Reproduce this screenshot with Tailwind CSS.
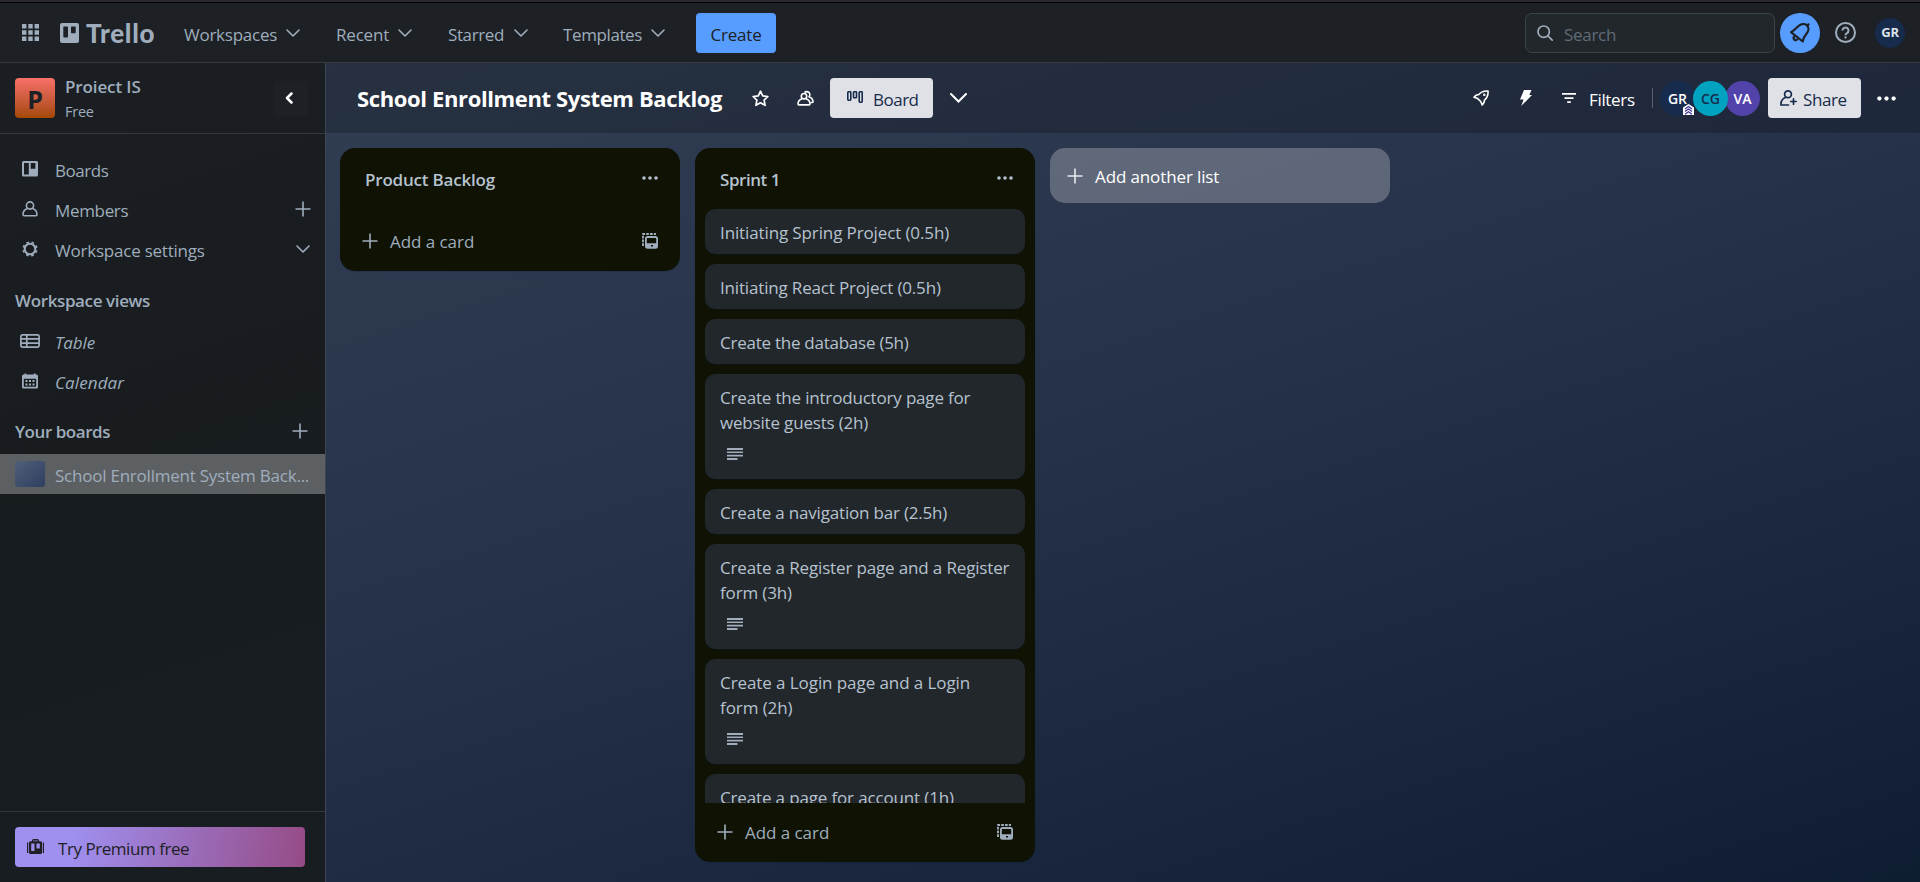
<!DOCTYPE html>
<html lang="en">
<head>
<meta charset="utf-8">
<title>School Enrollment System Backlog | Trello</title>
<script src="https://cdn.jsdelivr.net/npm/@tailwindcss/browser@4"></script>
</head>
<body class="h-[882px] w-[1920px] overflow-hidden bg-[linear-gradient(162deg,#344154_0%,#26324a_50%,#0f1d33_100%)] font-['Open_Sans','Noto_Sans',sans-serif] text-[17px] leading-[25px] text-[#9fadbc]">
<svg class="hidden">
  <symbol id="chev" viewBox="0 0 14 8"><path d="M1 1l6 6 6-6" fill="none" stroke="currentColor" stroke-width="1.6" stroke-linecap="round" stroke-linejoin="round"/></symbol>
  <symbol id="plus" viewBox="0 0 16 16"><path d="M8 .5v15M.5 8h15" fill="none" stroke="currentColor" stroke-width="1.6"/></symbol>
  <symbol id="dots" viewBox="0 0 16 4"><circle cx="2" cy="2" r="1.8"/><circle cx="8" cy="2" r="1.8"/><circle cx="14" cy="2" r="1.8"/></symbol>
  <symbol id="desc" viewBox="0 0 16 12"><path d="M0 0h16v2H0zM0 3.4h16v1.7H0zM0 6.8h16v1.7H0zM0 10h10.5v2H0z"/></symbol>
  <symbol id="template" viewBox="0 0 16 16"><path d="M1 13V1h13" fill="none" stroke="currentColor" stroke-width="1.9" stroke-dasharray="2.700 1.100"/><rect x="3.900" y="4" width="11.200" height="10.800" rx="1.600" fill="none" stroke="currentColor" stroke-width="1.800"/><path d="M4 10.300h11.200v1.700H4zM4 12h5v3H4zM11 12h4v3h-4zM9 13.500h2V15H9z"/></symbol>
</svg>
<div class="flex h-full flex-col">
  <!-- Top navigation -->
  <div class="h-[3px] shrink-0 border-b border-black bg-[#2b2a33]"></div>
  <nav class="flex h-[60px] shrink-0 items-center border-b border-[#37393d] bg-[#1d2125] pr-[15px] pl-[22px]">
    <svg class="h-[17px] w-[17px]" viewBox="0 0 17 17" fill="currentColor"><path d="M0 0h4.400v4.400H0zM6.300 0h4.400v4.400H6.300zM12.600 0H17v4.400h-4.400zM0 6.300h4.400v4.400H0zM6.300 6.300h4.400v4.400H6.300zM12.600 6.300H17v4.400h-4.400zM0 12.600h4.400V17H0zM6.300 12.600h4.400V17H6.300zM12.600 12.600H17V17h-4.400z"/></svg>
    <svg class="ml-[21px] h-5 w-[19px]" viewBox="0 0 19 20" fill="currentColor"><path fill-rule="evenodd" d="M2 0h15a2 2 0 0 1 2 2v16a2 2 0 0 1-2 2H2a2 2 0 0 1-2-2V2a2 2 0 0 1 2-2zM3.900 3.600a.6.6 0 0 0-.6.6v9.600c0 .3.300.6.600.6h3.500c.3 0 .6-.3.600-.6V4.200a.6.6 0 0 0-.6-.6zM11.600 3.600a.6.6 0 0 0-.6.6v5.400c0 .3.300.6.600.6h3.500c.3 0 .6-.3.600-.6V4.200a.6.6 0 0 0-.6-.6z"/></svg>
    <span class="ml-[7px] w-[98px] pt-px font-['Lato','Open_Sans',sans-serif] text-[26px] font-black tracking-[0.75px]">Trello</span>
    <div class="flex items-center gap-9">
      <div class="flex items-center"><span class="w-[102px] pt-[3px] tracking-[-0.25px]">Workspaces</span><svg class="h-2 w-3.5"><use href="#chev"/></svg></div>
      <div class="flex items-center"><span class="w-[62px] pt-[3px] tracking-[-0.2px]">Recent</span><svg class="h-2 w-3.5"><use href="#chev"/></svg></div>
      <div class="flex items-center"><span class="w-[66px] pt-[3px] tracking-[-0.38px]">Starred</span><svg class="h-2 w-3.5"><use href="#chev"/></svg></div>
      <div class="-ml-px flex items-center"><span class="w-[88px] pt-[3px] tracking-[-0.39px]">Templates</span><svg class="h-2 w-3.5"><use href="#chev"/></svg></div>
    </div>
    <div class="ml-[31px] flex h-10 w-20 items-center justify-center rounded-[4px] bg-[#579dff] pt-[3px] tracking-[-0.21px] text-[#1d2125]">Create</div>
    <div class="ml-auto flex h-10 w-[250px] items-center rounded-[7px] border border-[#3a444c] bg-[#22272b] pl-[11px]">
      <svg class="h-4 w-4" viewBox="0 0 16 16" fill="none" stroke="currentColor" stroke-width="1.700" stroke-linecap="round"><circle cx="6.700" cy="6.700" r="5.700"/><path d="M11 11l4.200 4.200"/></svg>
      <span class="ml-[11px] pt-[3px] tracking-[-0.3px] text-[#5f6c78]">Search</span>
    </div>
    <div class="ml-[5px] flex h-10 w-10 items-center justify-center rounded-full bg-[#579dff] text-[#1d2125]">
      <svg class="h-5 w-5" viewBox="0 0 20 20" fill="none" stroke="currentColor" stroke-width="2.200" stroke-linejoin="round" stroke-linecap="round"><path d="M1 9.200C4.500 7.500 6.500 5 8.500 3c2.500-2.200 6-2.800 8.500-.6 2.200 2.300 1.700 5.800-.5 8.300-1.900 2.100-3.300 4.300-3.800 7.800z"/><path d="M17.300 2.500l1.200-1.200M4.300 13.500a2 2 0 0 0 2.800 3"/></svg>
    </div>
    <svg class="ml-[15px] h-[21px] w-[21px]" viewBox="0 0 21 21" fill="none" stroke="currentColor" stroke-width="2"><circle cx="10.500" cy="10.500" r="9.500"/><path d="M7.500 8.500a3 3 0 1 1 4.500 2.600c-1 .5-1.500 1-1.500 2.100"/><circle cx="10.500" cy="15.500" r=".5" stroke-width="1.300"/></svg>
    <div class="ml-[19px] flex h-[30px] w-[30px] items-center justify-center rounded-full bg-[#172b4d] text-[13px] font-bold tracking-[-0.2px] text-[#dee4ea]">GR</div>
  </nav>

  <div class="flex min-h-0 flex-1">
    <!-- Workspace sidebar -->
    <aside class="flex w-[326px] shrink-0 flex-col border-r border-[#3c4654] bg-[linear-gradient(162deg,#1b1f23,#181c1f_45%,#171d21)]">
      <div class="flex h-[71px] shrink-0 items-center border-b border-[#34383c] pr-[17px] pl-[15px]">
        <div class="flex h-10 w-10 items-center justify-center rounded-[4px] bg-linear-to-b from-[#f87168] to-[#a54800] pt-[3px] text-[25px] font-bold text-[#1d2125]">P</div>
        <div class="ml-[10px]">
          <div class="-mt-px h-[19px] overflow-hidden leading-[25px] font-semibold tracking-[-0.12px]">Project IS</div>
          <div class="pt-[9px] text-[14.5px] leading-5 tracking-[-0.25px]">Free</div>
        </div>
        <div class="ml-auto flex h-[35px] w-[35px] items-center justify-center rounded bg-[#1d2125] pr-1 text-white">
          <svg class="h-3 w-[8px]" viewBox="0 0 8 12"><path d="M6.500 1.500L2 6l4.500 4.500" fill="none" stroke="currentColor" stroke-width="2.500" stroke-linecap="round" stroke-linejoin="round"/></svg>
        </div>
      </div>
      <div class="mt-[15px]">
        <div class="flex h-10 items-center pl-[22px]">
          <svg class="h-4 w-4" viewBox="0 0 16 16" fill="currentColor"><path fill-rule="evenodd" d="M1.500 0h13A1.500 1.500 0 0 1 16 1.500v12.500a1.500 1.500 0 0 1-1.500 1.500h-13A1.500 1.500 0 0 1 0 14V1.500A1.500 1.500 0 0 1 1.500 0zM2 2v11.400h4.800V2zM8.700 2v5.700h4.700V2z"/></svg>
          <span class="ml-[17px] pt-[3px] tracking-[-0.45px]">Boards</span>
        </div>
        <div class="flex h-10 items-center pr-[14px] pl-[22px]">
          <svg class="h-4 w-4" viewBox="0 0 16 16" fill="none" stroke="currentColor" stroke-width="1.600"><circle cx="8" cy="4.500" r="3.600"/><path d="M5.500 7.500C2.500 8.500 1 11 1 13.500c0 .8.400 1.300 1.200 1.300h11.600c.8 0 1.200-.5 1.200-1.300 0-2.500-1.500-5-4.500-6"/></svg>
          <span class="ml-[17px] pt-[3px] tracking-[-0.33px]">Members</span>
          <svg class="ml-auto h-4 w-4"><use href="#plus"/></svg>
        </div>
        <div class="flex h-10 items-center pr-[15px] pl-[22px]">
          <svg class="h-4 w-4" viewBox="0 0 16 16" fill="none" stroke="currentColor"><circle cx="8" cy="8" r="5.300" stroke-width="2"/><circle cx="8" cy="8" r="6.800" stroke-width="1.600" stroke-dasharray="2.600 2.740" stroke-dashoffset="-1.400"/></svg>
          <span class="ml-[17px] pt-[3px] tracking-[-0.22px]">Workspace settings</span>
          <svg class="ml-auto h-2 w-3.5"><use href="#chev"/></svg>
        </div>
      </div>
      <div class="mt-[17px] flex h-9 items-start pt-[2px] pl-[15px] font-semibold tracking-[-0.38px]">Workspace views</div>
      <div class="-mt-px italic">
        <div class="flex h-10 items-center pl-[20px]">
          <svg class="h-3.5 w-5" viewBox="0 0 20 14" fill="none" stroke="currentColor" stroke-width="1.700"><rect x=".9" y=".9" width="18.200" height="12.200" rx="1.500"/><path d="M1 4.900h18M1 9.100h18M6.800 1v12"/></svg>
          <span class="ml-[15px] pt-[3px] tracking-[-0.14px]">Table</span>
        </div>
        <div class="flex h-10 items-center pl-[22px]">
          <svg class="h-4 w-4" viewBox="0 0 16 16" fill="currentColor"><path fill-rule="evenodd" d="M1.500 1.500h1V.5h1.800v1h7.400v-1h1.800v1h1A1.500 1.500 0 0 1 16 3v11a1.500 1.500 0 0 1-1.500 1.500h-13A1.500 1.500 0 0 1 0 14V3a1.500 1.500 0 0 1 1.500-1.500zM1.800 5.800v7.200c0 .4.300.7.700.7h11c.4 0 .7-.3.700-.7V5.800z"/><path d="M3.500 7h2v2h-2zM7 7h2v2H7zM10.500 7h2v2h-2zM3.500 10.500h2v2h-2zM7 10.500h2v2H7zM10.500 10.500h2v2h-2z"/></svg>
          <span class="ml-[17px] pt-[3px] tracking-[0.1px]">Calendar</span>
        </div>
      </div>
      <div class="mt-[15px] flex h-[38px] items-center pr-[17px] pb-[8px] pl-[15px]">
        <span class="pt-px font-semibold tracking-[-0.45px]">Your boards</span>
        <svg class="ml-auto h-4 w-4"><use href="#plus"/></svg>
      </div>
      <div class="flex h-10 items-center bg-[#5d6063] pl-[15px]">
        <div class="h-[26px] w-[30px] rounded-[3px] bg-linear-to-br from-[#505f79] to-[#2f3f5f]"></div>
        <span class="ml-2.5 pt-[3px] tracking-[-0.23px] whitespace-nowrap">School Enrollment System Back...</span>
      </div>
      <div class="mt-auto flex h-[71px] items-center border-t border-[#34383c] px-[15px]">
        <div class="flex h-10 w-[290px] items-center rounded-[4px] bg-[linear-gradient(98deg,#9f8fef_0%,#9f8fef_20%,#964e8a_97%,#944884_100%)] pl-[12px] text-[#1d2125]">
          <svg class="-mt-px h-[15px] w-[17px]" viewBox="0 0 17 15" fill="currentColor"><path d="M0 3.500h1.200v10.500H0zM15.800 3.500H17v10.500h-1.200z"/><path fill-rule="evenodd" d="M5 2.300V1.500A1.500 1.500 0 0 1 6.500 0h4A1.500 1.500 0 0 1 12 1.500v.8h1.500A1.500 1.500 0 0 1 15 3.800v9.700a1.500 1.500 0 0 1-1.500 1.500h-10A1.500 1.500 0 0 1 2 13.500V3.800a1.500 1.500 0 0 1 1.500-1.500zM6.300 2.300h4.400v-.9H6.300zM4.200 4.500v7.500h3.300V4.500zM9.500 4.500v5h3.300v-5z"/></svg>
          <span class="ml-[14px] pt-[3px] tracking-[-0.45px]">Try Premium free</span>
        </div>
      </div>
    </aside>

    <main class="flex min-w-0 flex-1 flex-col">
      <!-- Board header -->
      <header class="flex h-[70px] shrink-0 items-center bg-black/20 pr-[24px] pl-[31px] text-white">
        <h1 class="w-[395px] pb-px text-[22px] leading-[30px] font-bold tracking-[-0.37px] whitespace-nowrap">School Enrollment System Backlog</h1>
        <svg class="h-[17px] w-[17px]" viewBox="0 0 17 17" fill="none" stroke="currentColor" stroke-width="1.700" stroke-linejoin="round"><path d="M8.500 1.200l2.200 4.700 5.200.6-3.800 3.600 1 5.200-4.600-2.500-4.600 2.500 1-5.200L1.100 6.500l5.200-.6z"/></svg>
        <svg class="ml-7 h-[17px] w-[17px]" viewBox="0 0 17 17" fill="none" stroke="currentColor" stroke-width="1.600" stroke-linejoin="round"><circle cx="7" cy="6.200" r="2.700"/><path d="M5 8.800C2.500 9.700 1 11.700 1 14c0 .5.300.9.900.9h10.200c.6 0 .9-.4.900-.9 0-2.300-1.500-4.300-4-5.200M7.500 2.600A2.900 2.900 0 1 1 12 6.800c2.500 1 4 2.700 4 5 0 .5-.3.700-.8.700h-1.500"/></svg>
        <div class="ml-[16px] flex h-10 w-[103px] items-center rounded-[4px] bg-[#dfe1e6] pl-[17px] text-[#172b4d]">
          <svg class="-mt-[3px] h-3 w-4" viewBox="0 0 16 12" fill="none" stroke="currentColor" stroke-width="1.600"><rect x=".8" y=".8" width="3" height="8.400" rx=".6"/><rect x="6.500" y=".8" width="3" height="6" rx=".6"/><rect x="12.200" y=".8" width="3" height="10.400" rx=".6"/></svg>
          <span class="ml-[10px] pt-[3px] tracking-[-0.5px]">Board</span>
        </div>
        <svg class="ml-[17px] h-[10px] w-[17px]" viewBox="0 0 17 10"><path d="M1 1l7.500 7.500L16 1" fill="none" stroke="currentColor" stroke-width="2" stroke-linecap="round"/></svg>

        <svg class="ml-auto h-4 w-4" viewBox="0 0 16 16" fill="none" stroke="currentColor" stroke-width="1.600" stroke-linejoin="round"><path d="M5.800 4.500C8.500 1.300 11.500.7 15 1c.3 3.500-.5 6.500-3.500 9.200l-.5 2.300-1.800 2.500-1.500-3.500-3-2.900L1 7.200 3 5.300z"/><circle cx="11.300" cy="4.800" r=".5"/></svg>
        <svg class="ml-[31px] h-4 w-3" viewBox="0 0 12 16" fill="currentColor"><path d="M4 0h7.500L9.300 5H12L1.200 16l2.400-6.500H0z"/></svg>
        <svg class="ml-[30px] h-[10px] w-3.5" viewBox="0 0 14 10" fill="currentColor"><path d="M0 0h14v1.800H0zM2.500 4.200h9V6h-9zM5.200 8.300h3.600V10H5.200z"/></svg>
        <span class="ml-[13px] w-[46px] pt-[3px] tracking-[-0.33px]">Filters</span>
        <div class="ml-[17px] h-5 w-px bg-white/25"></div>
        <div class="ml-[7px] flex text-[14px] font-semibold">
          <div class="relative flex h-[35px] w-[35px] items-center justify-center rounded-full bg-[#172b4d] text-white">GR
            <svg class="absolute top-[23px] left-[23px] z-20 h-[11px] w-[11px]" viewBox="0 0 11 11"><path d="M0 3.500L5.500 0 11 3.500V11H0z" fill="#fff"/><path d="M2 5l3.500-2.500L9 5M2 7.600l3.500-2.500L9 7.600M2 10.200l3.500-2.500L9 10.200" fill="none" stroke="#403294" stroke-width="1.200"/></svg>
          </div>
          <div class="z-10 -ml-[2px] flex h-[35px] w-[35px] items-center justify-center rounded-full bg-[#00a3bf] text-[#172b4d]">CG</div>
          <div class="-ml-[3px] flex h-[35px] w-[35px] items-center justify-center rounded-full bg-[#5243aa] text-white">VA</div>
        </div>
        <div class="ml-2 flex h-10 w-[93px] items-center rounded-[4px] bg-[#dfe1e6] pl-3 text-[#172b4d]">
          <svg class="h-4 w-[17px]" viewBox="0 0 17 16" fill="none" stroke="currentColor" stroke-width="1.700" stroke-linecap="round"><circle cx="8" cy="4.300" r="3.400"/><path d="M5.800 7.200C2.800 8.300 1 11 1 14v1h7.500M13.500 8.800v5.400M10.800 11.500h5.400"/></svg>
          <span class="ml-[6px] pt-[3px] tracking-[-0.42px]">Share</span>
        </div>
        <svg class="ml-4 h-[5px] w-[19px] fill-current" viewBox="0 0 16 4"><use href="#dots"/></svg>
      </header>

      <!-- Lists -->
      <div class="flex min-h-0 flex-1 items-start gap-[15px] px-3.5 pt-[15px]">
        <section class="flex h-[123px] w-[340px] flex-col rounded-[15px] bg-[#101204] text-[#b6c2cf] shadow-[0_1px_1px_#091e4240]">
          <div class="flex h-[60px] items-center pr-[22px] pl-[25px]"><h2 class="pt-[2px] font-semibold tracking-[-0.2px]">Product Backlog</h2><svg class="ml-auto h-1 w-4 fill-current"><use href="#dots"/></svg></div>
          <div class="mt-auto flex h-[60px] items-center pr-[22px] pl-[22px] text-[#9fadbc]"><svg class="h-4 w-4"><use href="#plus"/></svg><span class="ml-3 pt-px tracking-[-0.05px]">Add a card</span><svg class="ml-auto h-4 w-4 fill-current"><use href="#template"/></svg></div>
        </section>

        <section class="flex h-[714px] w-[340px] flex-col rounded-[15px] bg-[#101204] text-[#b6c2cf] shadow-[0_1px_1px_#091e4240]">
          <div class="mb-px flex h-[60px] shrink-0 items-center pr-[22px] pl-[25px]"><h2 class="pt-[2px] font-semibold tracking-[-0.46px]">Sprint 1</h2><svg class="ml-auto h-1 w-4 fill-current"><use href="#dots"/></svg></div>
          <div class="mx-2.5 flex h-[594px] flex-col gap-2.5 overflow-hidden whitespace-nowrap *:shrink-0 *:rounded-[10px] *:bg-[#22272b] *:px-[15px] *:pt-[11px] *:shadow-[0_1px_1px_#091e4240]">
            <div class="h-[45px] tracking-[-0.12px]">Initiating Spring Project (0.5h)</div>
            <div class="h-[45px] tracking-[-0.17px]">Initiating React Project (0.5h)</div>
            <div class="h-[45px] tracking-[-0.25px]">Create the database (5h)</div>
            <div class="h-[105px] tracking-[-0.18px]">Create the introductory page for<br>website guests (2h)<svg class="mt-[13px] ml-[7px] h-3 w-4 fill-[#9fadbc]"><use href="#desc"/></svg></div>
            <div class="h-[45px] tracking-[-0.19px]">Create a navigation bar (2.5h)</div>
            <div class="h-[105px] tracking-[-0.15px]">Create a Register page and a Register<br>form (3h)<svg class="mt-[13px] ml-[7px] h-3 w-4 fill-[#9fadbc]"><use href="#desc"/></svg></div>
            <div class="h-[105px] tracking-[-0.08px]">Create a Login page and a Login<br>form (2h)<svg class="mt-[13px] ml-[7px] h-3 w-4 fill-[#9fadbc]"><use href="#desc"/></svg></div>
            <div class="h-[45px] tracking-[-0.15px]">Create a page for account (1h)</div>
          </div>
          <div class="flex h-[58px] items-center pr-[22px] pl-[22px] text-[#9fadbc]"><svg class="h-4 w-4"><use href="#plus"/></svg><span class="ml-3 pt-px tracking-[-0.05px]">Add a card</span><svg class="ml-auto h-4 w-4 fill-current"><use href="#template"/></svg></div>
        </section>

        <div class="flex h-[55px] w-[340px] items-center rounded-[15px] bg-white/25 pl-[17px] text-white"><svg class="h-4 w-4 text-white/85"><use href="#plus"/></svg><span class="ml-3 pt-px tracking-[-0.12px]">Add another list</span></div>
      </div>
    </main>
  </div>
</div>
</body>
</html>
